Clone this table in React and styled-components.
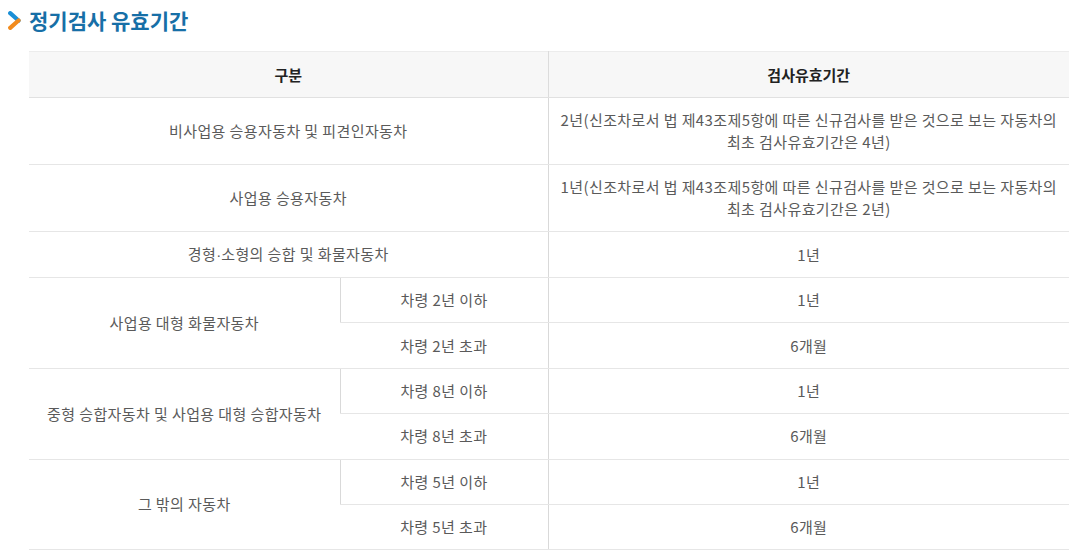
// React
import React from 'react'

// Styled components
import styled, { createGlobalStyle } from 'styled-components'

const Dot = styled.span`
  font-family: "Liberation Sans", sans-serif;
  letter-spacing: 0;
`

const rows = [
  { label: '비사업용 승용자동차 및 피견인자동차', value: ['2년(신조차로서 법 제43조제5항에 따른 신규검사를 받은 것으로 보는 자동차의', '최초 검사유효기간은 4년)'] },
  { label: '사업용 승용자동차', value: ['1년(신조차로서 법 제43조제5항에 따른 신규검사를 받은 것으로 보는 자동차의', '최초 검사유효기간은 2년)'] },
  { label: <>경형<Dot>·</Dot>소형의 승합 및 화물자동차</>, value: ['1년'], dark: true },
]

const groups = [
  { label: '사업용 대형 화물자동차', items: [['차령 2년 이하', '1년'], ['차령 2년 초과', '6개월']] },
  { label: '중형 승합자동차 및 사업용 대형 승합자동차', items: [['차령 8년 이하', '1년'], ['차령 8년 초과', '6개월']] },
  { label: '그 밖의 자동차', items: [['차령 5년 이하', '1년'], ['차령 5년 초과', '6개월']] },
]

const Arrow = () => (
  <svg width="13" height="19" viewBox="0 0 13 19">
    <path d="M2.2 2.2 L10.5 9.5" stroke="#1b8fd6" strokeWidth="4.2" strokeLinecap="round" />
    <path d="M10.5 9.5 L2.2 16.8" stroke="#f28b1d" strokeWidth="4.2" strokeLinecap="round" />
  </svg>
)

const App = () => (
  <Page>
    <GlobalStyle />
    <Title>
      <Arrow />
      정기검사 유효기간
    </Title>
    <Table>
      <colgroup>
        <col style={{ width: 311 }} />
        <col style={{ width: 208 }} />
        <col />
      </colgroup>
      <thead>
        <tr>
          <Th colSpan={2}>구분</Th>
          <Th>검사유효기간</Th>
        </tr>
      </thead>
      <tbody>
        {rows.map((r, i) => (
          <tr key={i}>
            <Td colSpan={2} dark={r.dark}>{r.label}</Td>
            <Td dark={r.dark}>
              {r.value.map((line, j) => (
                <React.Fragment key={j}>{j > 0 && <br />}{line}</React.Fragment>
              ))}
            </Td>
          </tr>
        ))}
        {groups.map((g, gi) =>
          g.items.map((item, ii) => (
            <GroupRow key={gi + '-' + ii}>
              {ii === 0 && <Td rowSpan={g.items.length}>{g.label}</Td>}
              <Td>{item[0]}</Td>
              <Td>{item[1]}</Td>
            </GroupRow>
          ))
        )}
      </tbody>
    </Table>
  </Page>
)

/* STYLE */
const GlobalStyle = createGlobalStyle`
  body {
    margin: 0;
    background: #fff;
    font-family: "Noto Sans CJK KR", "Noto Sans", sans-serif;
  }
`

const Page = styled.div`
  width: 1076px;
  height: 554px;
  overflow: hidden;
`

const Title = styled.h2`
  display: flex;
  align-items: center;
  gap: 8px;
  margin: 0;
  padding: 8px 0 0 8px;
  height: 24px;
  line-height: 24px;
  font-size: 21px;
  font-weight: 700;
  color: #176fa7;
`

const Table = styled.table`
  margin: 19px 0 0 29px;
  width: 1040px;
  border-collapse: collapse;
  table-layout: fixed;
  border-top: 1px solid #ececec;
  border-bottom: 1px solid #cfd3d6;
  font-size: 15px;
  line-height: 22px;
  color: #5a5a5a;
  text-align: center;
`

const Th = styled.th`
  height: 45px;
  padding: 0 10px;
  background: #f7f7f7;
  font-weight: 700;
  color: #222;
  border-bottom: 1px solid #e1e1e1;
  border-left: 1px solid #dcdcdc;
  &:first-child {
    border-left: 0;
  }
`

const Td = styled.td`
  padding: 11px 8px;
  letter-spacing: 0.4px;
  border-bottom: 1px solid #e6e6e6;
  border-top: 1px solid ${p => (p.dark ? '#cfcfcf' : '#e6e6e6')};
  border-left: 1px solid #d9d9d9;
  &:first-child {
    border-left: 0;
  }
`

const GroupRow = styled.tr`
  height: 45.4px;
`

export default App
